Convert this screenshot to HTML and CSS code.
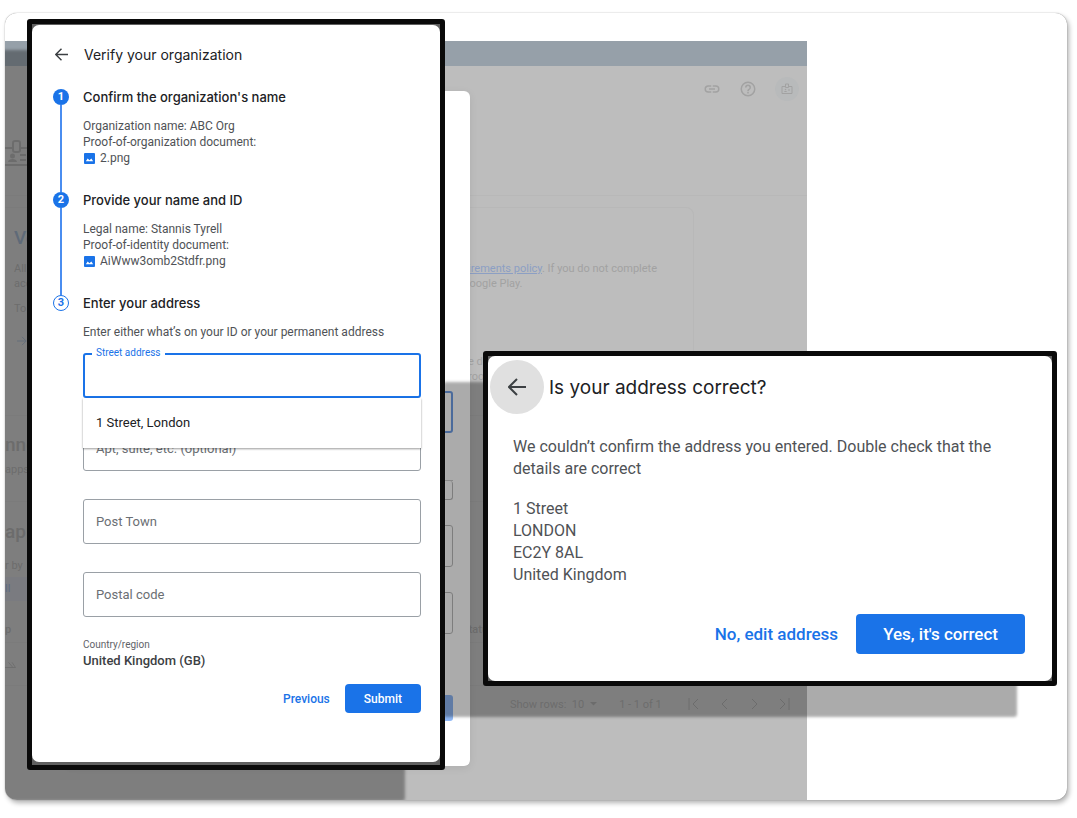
FILE: index.html
```html
<!DOCTYPE html>
<html lang="en">
<head>
  <meta charset="utf-8">
  <title>Verify your organization</title>
  <link rel="stylesheet" href="styles.css">
</head>
<body>

<div class="stage">

  <!-- dimmed console page -->
  <div class="console">
    <div class="topbar"></div>
    <div class="toolbar">
      <svg class="tool-icon" viewBox="0 0 24 24"><path d="M3.9 12c0-1.7 1.4-3.1 3.1-3.1h4V7H7a5 5 0 0 0 0 10h4v-1.9H7A3.1 3.1 0 0 1 3.9 12zM8 13h8v-2H8v2zm9-6h-4v1.9h4a3.1 3.1 0 0 1 0 6.2h-4V17h4a5 5 0 0 0 0-10z"/></svg>
      <svg class="tool-icon" viewBox="0 0 24 24"><path d="M11 18h2v-2h-2v2zm1-16a10 10 0 1 0 0 20 10 10 0 0 0 0-20zm0 18a8 8 0 1 1 0-16 8 8 0 0 1 0 16zm0-14a4 4 0 0 0-4 4h2a2 2 0 1 1 4 0c0 2-3 1.800-3 5h2c0-2.200 3-2.500 3-5a4 4 0 0 0-4-4z"/></svg>
      <span class="avatar">
        <svg viewBox="0 0 24 24"><path fill="none" stroke="currentColor" stroke-width="2" d="M9 7H2v14h20V7h-7M9 9V2h6v7z"/><path d="M6 18c0-3 6-3 6 0zM7.500 13a1.500 1.500 0 1 0 3 0 1.500 1.500 0 1 0-3 0zM14 13h4v2h-4z"/></svg>
      </span>
    </div>
    <div class="hero">
      <svg viewBox="0 0 48 28"><path fill="none" stroke="currentColor" stroke-width="2" d="M4 9h27M4 26h44M40 9h8"/><rect x="32" y="2" width="7" height="11" rx="2" fill="none" stroke="currentColor" stroke-width="2"/><path d="M27 23c0-4 9-4 9 0zM29 17a2 2 0 1 0 5 0 2 2 0 1 0-5 0zM39 15h6v2h-6zM39 20h6v2h-6z"/></svg>
    </div>
    <div class="policy">
      <h2>Verify</h2>
      <p><span>All</span><span><a href="#">uirements policy</a>. If you do not complete</span></p>
      <p><span>acc</span><span>Google Play.</span></p>
      <p class="spaced"><span>To</span></p>
      <svg class="go" viewBox="0 0 12 12"><path d="M0 6h11M6 1l5 5-5 5"/></svg>
      <p><span></span><span>he documents</span></p>
      <p><span></span><span>proof</span></p>
    </div>
    <div class="band">
      <h2>nnels</h2>
      <p>apps</p>
    </div>
    <div class="apps">
      <h2>apps</h2>
      <p>r by</p>
      <div class="filter">ll</div>
      <div class="thead"><span>p</span><span>Status</span></div>
      <div class="trow"><svg viewBox="0 0 16 16"><path d="M0 12h12L8 6M4 6l5 6"/></svg></div>
      <div class="pager">
        <span>Show rows: &nbsp;10</span>
        <svg class="caret" viewBox="0 0 8 4"><path d="M0 0h8L4 4z"/></svg>
        <span class="count">1 - 1 of 1</span>
        <svg viewBox="0 0 12 12"><path d="M1 0v12M10 1L5 6l5 5"/></svg>
        <svg viewBox="0 0 12 12"><path d="M9 1L4 6l5 5"/></svg>
        <svg viewBox="0 0 12 12"><path d="M4 1l5 5-5 5"/></svg>
        <svg viewBox="0 0 12 12"><path d="M2 1l5 5-5 5M11 0v12"/></svg>
      </div>
    </div>
  </div>

  <!-- dialog open inside the console -->
  <div class="under">
    <input class="u-active" type="text" aria-label="Street address" readonly>
    <div class="u-menu"></div>
    <input class="u-cut" type="text" aria-label="Apartment" readonly>
    <input type="text" aria-label="Town" readonly>
    <input type="text" aria-label="Code" readonly>
    <button type="button" aria-label="Submit"></button>
  </div>

  <!-- address check -->
  <section class="window confirm">
    <div class="panel">
      <header>
        <button class="back round" type="button" aria-label="Back">
          <svg viewBox="0 0 18 18"><path d="M18 9H2M9 1L1 9l8 8"/></svg>
        </button>
        <h1>Is your address correct?</h1>
      </header>
      <p>We couldn’t confirm the address you entered. Double check that the details are correct</p>
      <address>1 Street<br>LONDON<br>EC2Y 8AL<br>United Kingdom</address>
      <div class="actions">
        <button class="text-btn" type="button">No, edit address</button>
        <button class="main-btn" type="button">Yes, it's correct</button>
      </div>
    </div>
  </section>

  <!-- verification form -->
  <section class="window verify">
    <form class="panel">
      <header>
        <button class="back" type="button" aria-label="Back">
          <svg viewBox="0 0 18 18"><path d="M18 9H2M9 1L1 9l8 8"/></svg>
        </button>
        <h1>Verify your organization</h1>
      </header>

      <ol class="steps">
        <li>
          <span class="num">1</span>
          <h2>Confirm the organization's name</h2>
          <div class="info">
            <p>Organization name: ABC Org</p>
            <p>Proof-of-organization document:</p>
            <p class="file"><svg viewBox="0 0 12 12"><rect width="12" height="12" rx="1"/><path d="M2 9l2-3 2 2 2-2 2 3z"/></svg>2.png</p>
          </div>
        </li>
        <li>
          <span class="num">2</span>
          <h2>Provide your name and ID</h2>
          <div class="info">
            <p>Legal name: Stannis Tyrell</p>
            <p>Proof-of-identity document:</p>
            <p class="file"><svg viewBox="0 0 12 12"><rect width="12" height="12" rx="1"/><path d="M2 9l2-3 2 2 2-2 2 3z"/></svg>AiWww3omb2Stdfr.png</p>
          </div>
        </li>
        <li>
          <span class="num current">3</span>
          <h2>Enter your address</h2>
          <div class="info">
            <p>Enter either what’s on your ID or your permanent address</p>
          </div>
        </li>
      </ol>

      <div class="fields">
        <div class="field active">
          <label for="street">Street address</label>
          <input id="street" type="text">
          <ul class="menu" role="listbox">
            <li role="option">1 Street, London</li>
          </ul>
        </div>
        <input type="text" placeholder="Apt, suite, etc. (optional)" aria-label="Apt, suite, etc. (optional)">
        <input type="text" placeholder="Post Town" aria-label="Post Town">
        <input type="text" placeholder="Postal code" aria-label="Postal code">
      </div>

      <dl class="country">
        <dt>Country/region</dt>
        <dd>United Kingdom (GB)</dd>
      </dl>

      <div class="actions">
        <button class="text-btn" type="button">Previous</button>
        <button class="main-btn" type="button">Submit</button>
      </div>
    </form>
  </section>

</div>

</body>
</html>
```

FILE: styles.css
```css
* {
  box-sizing: border-box;
}

body {
  margin: 0;
  background: #fff;
  color: #3c4043;
  font-family: Roboto, "Liberation Sans", sans-serif;
}

h1, h2, p, ol, ul, dl, dd {
  margin: 0;
  padding: 0;
  list-style: none;
}

button, input {
  font-family: inherit;
}

.stage {
  position: relative;
  min-height: calc(100vh - 31px);
  margin: 13px 10px 18px 5px;
  padding-top: 28px;
  border-radius: 12px;
  background: #fff;
  overflow: hidden;
  display: flex;
  box-shadow: 0 0 1px rgba(0, 0, 0, 0.5), 2px 3px 5px rgba(0, 0, 0, 0.3);
}

/* console */
.console {
  width: 75.5%;
  background: #bdbdbd;
  color: #a2a2a2;
  font-size: 11px;
  line-height: 15px;
  overflow: hidden;
}

.console h2 {
  font-size: 19px;
  font-weight: 500;
  line-height: 24px;
}

.topbar {
  height: 25px;
  background: #96a0a9;
}

.toolbar {
  height: 46px;
  padding-right: 8px;
  display: flex;
  align-items: center;
  justify-content: flex-end;
  gap: 18px;
}

.tool-icon {
  width: 18px;
  fill: currentColor;
}

.avatar {
  width: 24px;
  height: 24px;
  border-radius: 50%;
  background: #b8babb;
  display: flex;
  align-items: center;
  justify-content: center;
}

.avatar svg {
  width: 12px;
  fill: currentColor;
}

.hero {
  height: 84px;
  padding-top: 27px;
  border-bottom: 1px solid #b8b8b8;
}

.hero svg {
  display: block;
  width: 48px;
  margin-left: -24px;
  fill: currentColor;
}

.policy {
  height: 209px;
  margin: 11px 113px 0 0;
  padding: 18px 9px 0;
  border: 1px solid #b8b8b8;
  border-left: none;
  border-radius: 0 8px 8px 0;
}

.policy h2 {
  margin-bottom: 11px;
  color: #8e9fb4;
}

.policy p {
  display: grid;
  grid-template-columns: 448px auto;
  min-height: 15px;
}

.policy a {
  color: #8c9fc4;
}

.policy .spaced {
  margin-top: 10px;
}

.go {
  display: block;
  width: 10px;
  margin: 20px 0 8px 3px;
  fill: none;
  stroke: #8e9fb4;
}

.band {
  height: 86px;
  padding-top: 17px;
  border-bottom: 1px solid #b8b8b8;
}

.band p {
  padding-top: 5px;
}

.apps {
  padding-top: 18px;
}

.apps p {
  padding: 14px 0 4px;
}

.filter {
  width: 50%;
  height: 24px;
  padding-top: 4px;
  background: #b6b8bf;
  color: #8c9fc4;
}

.thead {
  height: 42px;
  padding-top: 21px;
  border-bottom: 1px solid #b8b8b8;
  display: grid;
  grid-template-columns: 457px auto;
  font-weight: 500;
}

.trow {
  height: 43px;
  padding-top: 14px;
  border-bottom: 1px solid #b8b8b8;
}

.trow svg {
  width: 14px;
  fill: none;
  stroke: currentColor;
}

.pager {
  height: 36px;
  padding-right: 17px;
  display: flex;
  align-items: center;
  justify-content: flex-end;
  gap: 18px;
}

.pager svg {
  width: 12px;
  fill: none;
  stroke: currentColor;
}

.pager .caret {
  width: 7px;
  margin-left: -12px;
  fill: currentColor;
  stroke: none;
}

.count {
  margin: 0 8px 0 4px;
}

/* dialog behind the two windows */
.under {
  position: absolute;
  top: 78px;
  left: 60px;
  width: 405px;
  height: 675px;
  padding: 300px 17px 0;
  border-radius: 6px;
  background: #fff;
  display: flex;
  flex-direction: column;
  box-shadow: 0 2px 8px rgba(0, 0, 0, 0.08);
}

.under input {
  width: 100%;
  height: 42px;
  margin-bottom: 25px;
  border: 1px solid #bbb;
  border-radius: 3px;
}

.under .u-active {
  margin: 0;
  border: 2px solid #6f9fe8;
}

.under .u-menu {
  height: 48px;
  border-bottom: 1px solid #ccc;
}

.under .u-cut {
  height: 19px;
  border-top: none;
}

.under button {
  width: 70px;
  height: 26px;
  margin: 36px 0 0 auto;
  border: none;
  border-radius: 3px;
  background: #8fb8f6;
}

/* framed windows */
.window {
  position: absolute;
  border: 5px solid #0a0a0a;
  border-radius: 3px;
  background: #606060;
  box-shadow: -40px 31px 3px rgba(0, 0, 0, 0.33);
}

.panel {
  border-radius: 7px;
  background: #fff;
}

.window header {
  display: flex;
  align-items: center;
}

.window h1 {
  color: #202124;
  font-weight: 400;
}

.back {
  padding: 0;
  border: none;
  background: none;
  display: flex;
  align-items: center;
  justify-content: center;
}

.back svg {
  fill: none;
  stroke: #3c4043;
  stroke-width: 2;
}

.actions {
  display: flex;
  justify-content: flex-end;
  align-items: center;
}

.text-btn, .main-btn {
  border: none;
  border-radius: 4px;
  background: none;
  color: #1a73e8;
  font-weight: 500;
}

.main-btn {
  background: #1a73e8;
  color: #fff;
}

/* verify window */
.verify {
  top: 6px;
  left: 22px;
  width: 418px;
  padding: 1px 0 3px;
}

.verify .panel {
  padding: 17px 19px 49px 21px;
}

.verify header {
  height: 24px;
  gap: 15px;
}

.verify h1 {
  font-family: Inter, Roboto, sans-serif;
  font-size: 14px;
}

.verify .back {
  width: 16px;
}

.verify .back svg {
  width: 13px;
}

.steps {
  margin-top: 21px;
}

.steps li {
  position: relative;
  display: grid;
  grid-template-columns: 16px 1fr;
  column-gap: 14px;
  row-gap: 11px;
  padding-bottom: 24px;
}

.steps li:last-child {
  padding-bottom: 13px;
}

/* connector to the next step */
.steps li:not(:last-child)::before {
  content: "";
  position: absolute;
  top: 18px;
  bottom: -2px;
  left: 7px;
  width: 2px;
  background: #4a8df0;
}

.num {
  width: 16px;
  height: 16px;
  margin-top: 2px;
  border-radius: 50%;
  background: #1a73e8;
  color: #fff;
  font-size: 11px;
  font-weight: 700;
  line-height: 16px;
  text-align: center;
}

.num.current {
  border: 1px solid #1a73e8;
  background: #fff;
  color: #1a73e8;
  line-height: 14px;
}

.steps h2 {
  color: #202124;
  font-family: Inter, Roboto, sans-serif;
  font-size: 13px;
  font-weight: 500;
  line-height: 20px;
}

.info {
  grid-column: 2;
  color: #4f5256;
  font-size: 12px;
  line-height: 16px;
}

.file {
  display: flex;
  align-items: center;
  gap: 5px;
}

.file svg {
  width: 11px;
  margin-left: 1px;
  fill: #1a73e8;
}

.file path {
  fill: #fff;
}

.fields {
  margin-left: 30px;
  display: flex;
  flex-direction: column;
  gap: 28px;
}

.fields input {
  display: block;
  width: 100%;
  height: 45px;
  padding: 0 12px;
  border: 1px solid #9aa0a6;
  border-radius: 3px;
  background: #fff;
  font-size: 13px;
}

.fields input::placeholder {
  color: #6b6f74;
  opacity: 1;
}

.field {
  position: relative;
}

.field.active input {
  border: 2px solid #1a73e8;
  outline: none;
}

.field label {
  position: absolute;
  top: -7px;
  left: 9px;
  padding: 0 4px;
  background: #fff;
  color: #1a73e8;
  font-size: 10px;
  line-height: 14px;
}

.menu {
  position: absolute;
  top: 45px;
  left: 0;
  right: 0;
  padding: 0 13px;
  background: #fff;
  color: #202124;
  font-size: 13px;
  line-height: 50px;
  box-shadow: 0 1px 2px rgba(0, 0, 0, 0.4);
}

.country {
  margin: 21px 0 0 30px;
}

.country dt {
  color: #5f6368;
  font-size: 10px;
  line-height: 14px;
}

.country dd {
  font-size: 13px;
  font-weight: 500;
  line-height: 18px;
}

.verify .actions {
  margin-top: 14px;
}

.verify .text-btn, .verify .main-btn {
  height: 29px;
  padding: 0 15px;
  font-size: 12px;
}

.verify .main-btn {
  padding: 0 19px;
}

/* confirm window */
.confirm {
  top: 338px;
  right: 10px;
  width: 574px;
}

.confirm .panel {
  padding: 4px 27px 27px 2px;
}

.confirm header {
  gap: 5px;
}

.confirm .round {
  width: 54px;
  height: 54px;
  border-radius: 50%;
  background: #e0e0e0;
}

.confirm .back svg {
  width: 18px;
}

.confirm h1 {
  font-family: Inter, Roboto, sans-serif;
  font-size: 19px;
}

.confirm p, .confirm address {
  margin: 22px 0 0 23px;
  color: #4f5256;
  font-size: 16px;
  font-style: normal;
  line-height: 22px;
}

.confirm address {
  margin-top: 18px;
}

.confirm .actions {
  margin-top: 28px;
}

.confirm .text-btn, .confirm .main-btn {
  height: 40px;
  padding: 0 18px;
  font-size: 17px;
}

.confirm .main-btn {
  padding: 0 27px;
}
```
